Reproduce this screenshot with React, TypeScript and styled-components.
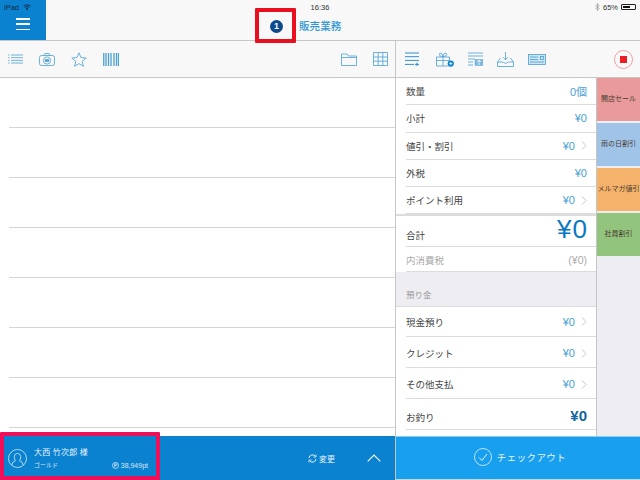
import React from 'react';
import styled, { createGlobalStyle } from 'styled-components';

const GlobalStyle = createGlobalStyle`
  html, body {
    margin: 0;
    padding: 0;
    background: #fff;
  }
  * { box-sizing: border-box; }
`;

const BLUE = '#4a9fd4';
const FONT = `"Noto Sans CJK JP", "Noto Sans", sans-serif`;

const Page = styled.div`
  width: 640px;
  height: 480px;
  position: relative;
  overflow: hidden;
  display: flex;
  flex-direction: column;
  font-family: ${FONT};
  background: #fff;
`;

const TopBar = styled.header`
  height: 41px;
  display: flex;
  background: #f8f8f8;
  border-bottom: 1px solid #c6c6c6;
`;

const MenuBlock = styled.div`
  width: 46px;
  background: #0a82d0;
  display: flex;
  flex-direction: column;
`;

const DeviceRow = styled.div`
  height: 14px;
  padding: 0 0 0 4px;
  display: flex;
  align-items: center;
  gap: 4px;
  font: 7.5px "Liberation Sans", sans-serif;
  color: #0d2a44;
`;

const Burger = styled.div`
  margin: 4px 0 0 16px;
  width: 14px;
  height: 12px;
  display: flex;
  flex-direction: column;
  justify-content: space-between;

  & span {
    height: 1.5px;
    background: #fff;
    display: block;
  }
`;

const TopMain = styled.div`
  flex: 1;
  display: flex;
  flex-direction: column;
`;

const StatusRow = styled.div`
  height: 14px;
  display: grid;
  grid-template-columns: 1fr 24px 1fr;
  margin-left: -46px;
  padding: 0 4px;
  align-items: center;
  font: 7.5px "Liberation Sans", sans-serif;
  color: #333;
`;

const Clock = styled.div`
  grid-column: 2;
  text-align: center;
  white-space: nowrap;
`;

const Battery = styled.div`
  grid-column: 3;
  display: flex;
  justify-content: flex-end;
  align-items: center;
  gap: 3px;
`;

const BatteryCell = styled.span`
  width: 15px;
  height: 6px;
  border: 1px solid #222;
  border-radius: 1px;
  display: block;
  padding: 1px;

  & i {
    display: block;
    height: 100%;
    width: 65%;
    background: #111;
  }
`;

const TitleRow = styled.div`
  display: flex;
  align-items: center;
  gap: 16px;
  padding: 5px 0 0 224px;
`;

const Badge = styled.span`
  width: 13px;
  height: 13px;
  border-radius: 50%;
  background: #0c4a8c;
  color: #fff;
  font: bold 9px/13px "Liberation Sans", sans-serif;
  text-align: center;
`;

const Title = styled.div`
  font-size: 10.5px;
  line-height: 14px;
  font-weight: 500;
  color: #2f97d3;
  letter-spacing: 0.1px;
`;

const Body = styled.div`
  flex: 1;
  display: grid;
  grid-template-columns: 396px 244px;
  min-height: 0;
`;

const LeftColumn = styled.section`
  display: flex;
  flex-direction: column;
  border-right: 1px solid #c6c6c6;
  min-height: 0;
`;

const RightColumn = styled.section`
  display: flex;
  flex-direction: column;
  min-height: 0;
`;

const Toolbar = styled.div<{ $gap: number; $left: number }>`
  height: 37px;
  flex: none;
  display: flex;
  align-items: center;
  gap: ${(p) => p.$gap}px;
  padding: 0 7px 0 ${(p) => p.$left}px;
  background: #f8f8f8;
  border-bottom: 1px solid #c6c6c6;
`;

const Spacer = styled.div`
  flex: 1;
`;

const Lines = styled.div`
  flex: 1;
  padding-left: 9px;
  background: #fff;
`;

const Line = styled.div`
  height: 50px;
  border-bottom: 1px solid #d4d4d4;
`;

const CustomerBar = styled.div`
  height: 44px;
  flex: none;
  background: #0a82d0;
  color: #e8f4fc;
  display: flex;
  align-items: center;
  padding: 0 14px 0 8px;
`;

const Customer = styled.div`
  width: 140px;
  display: flex;
  align-items: center;
  gap: 7px;
`;

const CustomerInfo = styled.div`
  flex: 1;
  display: flex;
  flex-direction: column;
  gap: 4px;
`;

const CustomerName = styled.div`
  font-size: 8px;
  line-height: 10px;
  letter-spacing: 0.3px;
`;

const CustomerMeta = styled.div`
  display: flex;
  justify-content: space-between;
  align-items: center;
  font-size: 6px;
  line-height: 8px;
  opacity: 0.9;
`;

const Points = styled.span`
  display: flex;
  align-items: center;
  gap: 2px;
  font: 7px "Liberation Sans", sans-serif;
`;

const ChangeButton = styled.div`
  margin-left: auto;
  display: flex;
  align-items: center;
  gap: 2px;
  font-size: 8px;
  margin-right: 32px;
`;

const Split = styled.div`
  flex: 1;
  display: grid;
  grid-template-columns: 201px 43px;
  min-height: 0;
`;

const Totals = styled.div`
  background: #fff;
  border-right: 1px solid #c6c6c6;
  display: flex;
  flex-direction: column;
  overflow: hidden;
`;

const Row = styled.div<{ $h: number; $top?: number; $muted?: boolean }>`
  height: ${(p) => p.$h}px;
  flex: none;
  margin-left: 10px;
  padding: ${(p) => p.$top ?? 0}px 9px 0 0;
  display: flex;
  align-items: center;
  justify-content: space-between;
  border-bottom: 1px solid #dcdcdc;
  font-size: 9.5px;
  color: ${(p) => (p.$muted ? '#aaa' : '#444')};
`;

const Value = styled.span`
  display: flex;
  align-items: center;
  gap: 6px;
  color: ${BLUE};
  font: 11px "Liberation Sans", "Noto Sans CJK JP", sans-serif;
`;

const TaxValue = styled.span`
  font: 10.5px "Liberation Sans", "Noto Sans CJK JP", sans-serif;
`;

const TotalValue = styled.span`
  color: #0a78c4;
  font: 26px/24px "Liberation Sans", "Noto Sans CJK JP", sans-serif;
  letter-spacing: 1px;
  margin: -11px -1px 0 0;
`;

const ChangeValue = styled.span`
  color: #14669f;
  font: bold 15px "Liberation Sans", "Noto Sans CJK JP", sans-serif;
  margin-top: -2px;
`;

const Divider = styled.div`
  height: 2px;
  flex: none;
  background: #dcdcdc;
`;

const SectionHead = styled.div`
  height: 35px;
  flex: none;
  padding: 15px 0 0 10px;
  background: #eeeef2;
  border-bottom: 1px solid #dcdcdc;
  font-size: 8.5px;
  line-height: 14px;
  color: #999;
`;

const Rail = styled.div`
  background: #eeeef2;
  display: flex;
  flex-direction: column;
  gap: 2px;
`;

const Tag = styled.div<{ $bg: string }>`
  height: 43px;
  flex: none;
  padding-bottom: 3px;
  background: ${(p) => p.$bg};
  display: flex;
  align-items: center;
  justify-content: center;
  font-size: 7px;
  color: #4a3a30;
  white-space: nowrap;
`;

const Checkout = styled.div`
  height: 44px;
  flex: none;
  padding: 0 0 2px 4px;
  background: #189fee;
  border-top: 1px solid #8ccdf4;
  border-bottom: 1px solid #c6d6e0;
  color: #e4f4fe;
  display: flex;
  align-items: center;
  justify-content: center;
  gap: 5px;
  font-size: 9.5px;
  letter-spacing: 0.4px;
`;

const Highlight = styled.div<{ $color: string; $w: number; $h: number; $x: number; $y: number; $b: number }>`
  position: absolute;
  left: ${(p) => p.$x}px;
  top: ${(p) => p.$y}px;
  width: ${(p) => p.$w}px;
  height: ${(p) => p.$h}px;
  border: ${(p) => p.$b}px solid ${(p) => p.$color};
  border-radius: 1px;
`;

const Icon: React.FC<{ w: number; h: number; stroke?: string; children: React.ReactNode }> = ({
  w,
  h,
  stroke = '#4a9fd4',
  children,
}) => (
  <svg width={w} height={h} viewBox={`0 0 ${w} ${h}`} fill="none" stroke={stroke} strokeWidth={0.8} style={{ flex: 'none' }}>
    {children}
  </svg>
);

const Chevron = () => (
  <Icon w={6} h={9} stroke="#c4c4c8">
    <path d="M1 0.5 L5 4.5 L1 8.5" strokeWidth={1} />
  </Icon>
);

const Wifi = () => (
  <svg width="8" height="6" viewBox="0 0 8 6" fill="none" stroke="#0d2a44" strokeWidth={0.9}>
    <path d="M0.5 2 Q4 -0.6 7.5 2 M1.8 3.4 Q4 1.8 6.2 3.4" />
    <circle cx="4" cy="5" r="0.6" fill="#0d2a44" />
  </svg>
);

const items = [
  { label: '数量', value: '0個' },
  { label: '小計', value: '¥0' },
  { label: '値引・割引', value: '¥0', more: true },
  { label: '外税', value: '¥0' },
  { label: 'ポイント利用', value: '¥0', more: true },
];

const payments = ['現金預り', 'クレジット', 'その他支払'];

const tags = [
  { label: '開店セール', bg: '#e99a9a' },
  { label: '雨の日割引', bg: '#a0c4e8' },
  { label: 'メルマガ値引', bg: '#f5b26b' },
  { label: '社員割引', bg: '#93c47d' },
];

const App: React.FC = () => (
  <Page>
    <GlobalStyle />
    <TopBar>
      <MenuBlock>
        <DeviceRow>
          iPad <Wifi />
        </DeviceRow>
        <Burger>
          <span />
          <span />
          <span />
        </Burger>
      </MenuBlock>
      <TopMain>
        <StatusRow>
          <Clock>16:36</Clock>
          <Battery>
            <Icon w={5} h={8} stroke="#999">
              <path d="M0.5 2 L4 5.5 L2.4 7.5 V0.5 L4 2.5 L0.5 6" />
            </Icon>
            65%
            <BatteryCell>
              <i />
            </BatteryCell>
          </Battery>
        </StatusRow>
        <TitleRow>
          <Badge>1</Badge>
          <Title>販売業務</Title>
        </TitleRow>
      </TopMain>
    </TopBar>
    <Body>
      <LeftColumn>
        <Toolbar $gap={16} $left={8}>
          <Icon w={15} h={10}>
            <path d="M0 1 H1.5 M3 1 H15 M0 3.7 H1.5 M3 3.7 H15 M0 6.4 H1.5 M3 6.4 H15 M0 9 H1.5 M3 9 H15" />
          </Icon>
          <Icon w={16} h={13}>
            <rect x="0.5" y="2.5" width="15" height="10" rx="2" />
            <path d="M5 2.5 L6 0.5 H10 L11 2.5" />
            <circle cx="8" cy="7.5" r="3.6" />
            <rect x="6" y="6.3" width="4" height="2.4" fill="#4a9fd4" strokeWidth={0.3} />
          </Icon>
          <Icon w={16} h={15}>
            <path d="M8 0.8 L10 5.6 L15.2 6 L11.2 9.3 L12.5 14.3 L8 11.6 L3.5 14.3 L4.8 9.3 L0.8 6 L6 5.6 Z" />
          </Icon>
          <Icon w={16} h={13}>
            <path
              d="M0.75 0 V13 M3 0 V13 M5.5 0 V13 M8 0 V13 M11 0 V13 M13.5 0 V13 M15.5 0 V13"
              strokeWidth={1.3}
            />
          </Icon>
          <Spacer />
          <Icon w={16} h={13}>
            <path d="M0.5 12.5 V1 H6 L7.5 3 H15.5 V12.5 Z M0.5 4.5 H15.5" />
          </Icon>
          <Icon w={15} h={14}>
            <path d="M0.5 0.5 H14.5 V13.5 H0.5 Z M0.5 5 H14.5 M0.5 9.2 H14.5 M5.2 0.5 V13.5 M9.8 0.5 V13.5" />
          </Icon>
        </Toolbar>
        <Lines>
          {Array.from({ length: 7 }, (_, i) => (
            <Line key={i} />
          ))}
        </Lines>
        <CustomerBar>
          <Customer>
            <Icon w={19} h={19} stroke="#d6ecfa">
              <circle cx="9.5" cy="9.5" r="9" />
              <path d="M3.8 16 Q4.2 12.6 7.4 11.8 Q6.2 10.2 6.3 7.5 Q6.6 4.4 9.5 4.4 Q12.4 4.4 12.7 7.5 Q12.8 10.2 11.6 11.8 Q14.8 12.6 15.2 16" />
            </Icon>
            <CustomerInfo>
              <CustomerName>大西 竹次郎 様</CustomerName>
              <CustomerMeta>
                ゴールド
                <Points>
                  <Icon w={7} h={7} stroke="#e8f4fc">
                    <circle cx="3.5" cy="3.5" r="3" />
                    <path d="M2.7 5.2 V1.9 H4 Q5 1.9 5 2.8 Q5 3.7 4 3.7 H2.7" />
                  </Icon>
                  38,949pt
                </Points>
              </CustomerMeta>
            </CustomerInfo>
          </Customer>
          <ChangeButton>
            <Icon w={9} h={9} stroke="#e8f4fc">
              <path d="M1 4 A3.6 3.6 0 0 1 7.4 2.2 M8 5 A3.6 3.6 0 0 1 1.6 6.8" strokeWidth={1} />
              <path d="M8 0.5 V3 H5.5 M1 8.5 V6 H3.5" strokeWidth={0.8} />
            </Icon>
            変更
          </ChangeButton>
          <Icon w={14} h={8} stroke="#fff">
            <path d="M0.7 7.3 L7 1 L13.3 7.3" strokeWidth={1.1} />
          </Icon>
        </CustomerBar>
      </LeftColumn>
      <RightColumn>
        <Toolbar $gap={14} $left={9}>
          <Icon w={17} h={14} stroke="#2f8fcc">
            <path d="M0 1 H14 M0 4.7 H14 M0 8.4 H14 M0 12.4 H9 M10 12.4 H14 M12 10.5 V14.2" strokeWidth={1} />
          </Icon>
          <Icon w={18} h={16}>
            <path d="M0.5 6 H13.5 V15 H0.5 Z M0.5 9.5 H13.5 M7 3 V15 M7 5.5 Q2.5 5.5 3.5 2.5 Q5 0.5 7 4.5 Q9 0.5 10.5 2.5 Q11.5 5.5 7 5.5" />
            <circle cx="14.8" cy="12.6" r="3.1" fill="#0a82d0" stroke="none" />
            <path d="M13.2 12.6 H16.4 M14.8 11 V14.2" stroke="#fff" />
          </Icon>
          <Icon w={15} h={14}>
            <path d="M0 1 H15 M0 4 H15 M0 7 H7 M0 10 H5 M0 13 H5" />
            <rect x="7" y="7.5" width="8" height="6" fill="#7fb8de" strokeWidth={0.4} />
            <path d="M11 13 V8.5 M9 10 L11 8 L13 10" stroke="#fff" />
          </Icon>
          <Icon w={17} h={15}>
            <path d="M3.5 6 L0.5 10 V14.5 H16.5 V10 L13.5 6 M0.5 10 H5.5 Q8.5 12.8 11.5 10 H16.5 M8.5 0 V7.5 M6 5.2 L8.5 7.8 L11 5.2" />
          </Icon>
          <Icon w={18} h={11}>
            <rect x="0.5" y="0.5" width="17" height="10" fill="#cfe4f3" />
            <path d="M2 3 H10 M2 5.5 H10 M2 8 H16" />
            <rect x="12.5" y="2.5" width="3" height="3" />
          </Icon>
          <Spacer />
          <Icon w={19} h={19} stroke="#e88a8a">
            <circle cx="9.5" cy="9.5" r="9" />
            <rect x="6" y="6" width="7" height="7" fill="#ee1c25" stroke="none" />
          </Icon>
        </Toolbar>
        <Split>
          <Totals>
            {items.map((item) => (
              <Row key={item.label} $h={27.3}>
                {item.label}
                <Value>
                  {item.value}
                  {item.more && <Chevron />}
                </Value>
              </Row>
            ))}
            <Divider />
            <Row $h={31} $top={7}>
              合計
              <TotalValue>¥0</TotalValue>
            </Row>
            <Row $h={25} $top={1} $muted>
              内消費税
              <TaxValue>(¥0)</TaxValue>
            </Row>
            <SectionHead>預り金</SectionHead>
            {payments.map((label, i) => (
              <Row key={label} $h={i === 0 ? 30 : 31} $top={i === 0 ? 0 : 2}>
                {label}
                <Value>
                  ¥0
                  <Chevron />
                </Value>
              </Row>
            ))}
            <Row $h={31} $top={5}>
              お釣り
              <ChangeValue>¥0</ChangeValue>
            </Row>
          </Totals>
          <Rail>
            {tags.map((tag) => (
              <Tag key={tag.label} $bg={tag.bg}>
                {tag.label}
              </Tag>
            ))}
          </Rail>
        </Split>
        <Checkout>
          <Icon w={18} h={18} stroke="#e4f4fe">
            <circle cx="9" cy="9" r="8.5" />
            <path d="M5 9.5 L8 12.5 L13 6" strokeWidth={1} />
          </Icon>
          チェックアウト
        </Checkout>
      </RightColumn>
    </Body>
    <Highlight $color="#e8101f" $x={255} $y={8} $w={41} $h={35} $b={4} />
    <Highlight $color="#f0105a" $x={0} $y={432} $w={160} $h={48} $b={4} />
  </Page>
);

export default App;
